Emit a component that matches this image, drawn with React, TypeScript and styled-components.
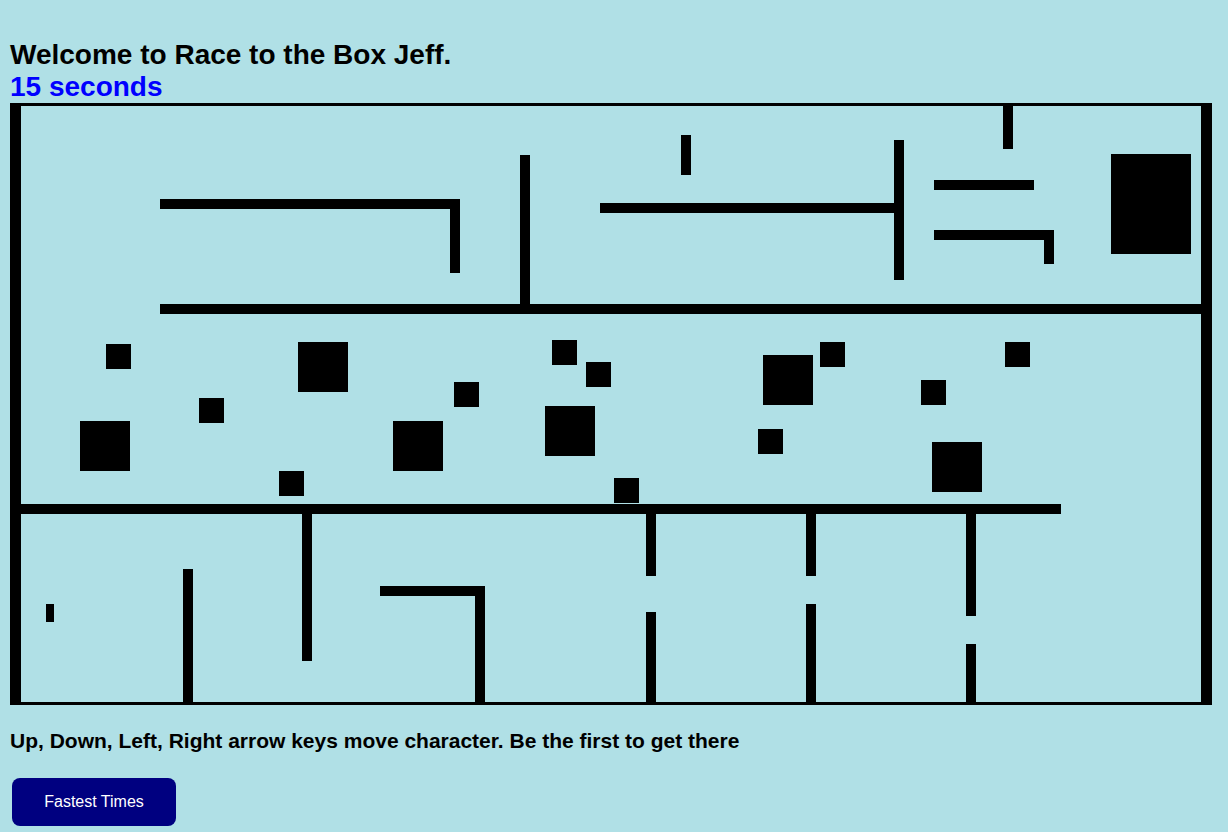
import React from "react";
import styled, { createGlobalStyle } from "styled-components";

const GlobalStyle = createGlobalStyle`
  html, body {
    margin: 0;
    padding: 0;
    background: #b0e0e6;
  }
  body {
    font-family: "Liberation Sans", Arial, sans-serif;
    color: #000;
  }
`;

const Page = styled.div`
  padding: 39px 10px 0 10px;
  display: flex;
  flex-direction: column;
  align-items: flex-start;
`;

const Title = styled.h1`
  margin: 0;
  font-size: 28px;
  font-weight: bold;
  line-height: 32px;
`;

const Timer = styled.div`
  font-size: 28px;
  font-weight: bold;
  line-height: 32px;
  color: #0000ff;
`;

const Board = styled.div`
  position: relative;
  box-sizing: border-box;
  width: 1202px;
  height: 602px;
  border: 3px solid #000;
  background: #b0e0e6;
  overflow: hidden;
`;

const ORIGIN_X = 13;
const ORIGIN_Y = 106;

const Wall = styled.div<{ $x: number; $y: number; $w: number; $h: number }>`
  position: absolute;
  left: ${(p) => p.$x}px;
  top: ${(p) => p.$y}px;
  width: ${(p) => p.$w}px;
  height: ${(p) => p.$h}px;
  background: #000;
`;

const Player = styled(Wall)`
  background: #000;
`;

const Instructions = styled.p`
  margin: 24px 0 0 0;
  font-size: 21px;
  font-weight: bold;
  line-height: 24px;
`;

const Button = styled.button`
  margin: 25px 0 0 2px;
  width: 164px;
  height: 48px;
  border: none;
  border-radius: 8px;
  background: #000080;
  color: #fff;
  font-family: "Liberation Sans", Arial, sans-serif;
  font-size: 16px;
  cursor: pointer;
`;

type Rect = [number, number, number, number];

const walls: Rect[] = [
  // outer side walls
  [13, 106, 21, 702],
  [1201, 106, 1209, 702],
  // upper section
  [160, 199, 460, 209],
  [450, 199, 460, 273],
  [160, 304, 1201, 314],
  [520, 155, 530, 304],
  [681, 135, 691, 175],
  [600, 203, 894, 213],
  [894, 140, 904, 280],
  [1003, 106, 1013, 149],
  [934, 180, 1034, 190],
  [934, 230, 1054, 240],
  [1044, 230, 1054, 264],
  // goal box
  [1111, 154, 1191, 254],
  // middle blocks
  [106, 344, 131, 369],
  [298, 342, 348, 392],
  [199, 398, 224, 423],
  [80, 421, 130, 471],
  [279, 471, 304, 496],
  [393, 421, 443, 471],
  [454, 382, 479, 407],
  [552, 340, 577, 365],
  [586, 362, 611, 387],
  [545, 406, 595, 456],
  [614, 478, 639, 503],
  [763, 355, 813, 405],
  [820, 342, 845, 367],
  [758, 429, 783, 454],
  [921, 380, 946, 405],
  [932, 442, 982, 492],
  [1005, 342, 1030, 367],
  // lower section
  [13, 504, 1061, 514],
  [302, 514, 312, 661],
  [183, 569, 193, 702],
  [380, 586, 485, 596],
  [475, 586, 485, 702],
  [646, 514, 656, 576],
  [646, 612, 656, 702],
  [806, 514, 816, 576],
  [806, 604, 816, 702],
  [966, 514, 976, 616],
  [966, 644, 976, 702],
];

const player: Rect = [46, 604, 54, 622];

export default function App() {
  return (
    <>
      <GlobalStyle />
      <Page>
        <Title>Welcome to Race to the Box Jeff.</Title>
        <Timer>15 seconds</Timer>
        <Board>
          {walls.map(([x1, y1, x2, y2], i) => (
            <Wall
              key={i}
              $x={x1 - ORIGIN_X}
              $y={y1 - ORIGIN_Y}
              $w={x2 - x1}
              $h={y2 - y1}
            />
          ))}
          <Player
            $x={player[0] - ORIGIN_X}
            $y={player[1] - ORIGIN_Y}
            $w={player[2] - player[0]}
            $h={player[3] - player[1]}
          />
        </Board>
        <Instructions>
          Up, Down, Left, Right arrow keys move character. Be the first to get there
        </Instructions>
        <Button>Fastest Times</Button>
      </Page>
    </>
  );
}
